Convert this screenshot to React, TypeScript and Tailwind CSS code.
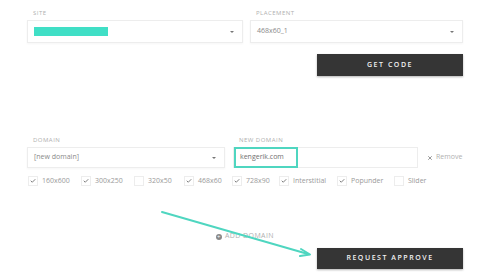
import { Check, X } from "lucide-react";

const font = { fontFamily: "'Open Sans', Lato, sans-serif" };

function Label({ children }: { children: React.ReactNode }) {
  return (
    <div className="mb-[3px] h-[8px] pl-[6px] text-[6px] leading-[8px] tracking-[0.08em] text-[#b0b0b0] uppercase">
      {children}
    </div>
  );
}

function Chevron() {
  return <span className="h-0 w-0 border-x-[2px] border-t-[2.5px] border-x-transparent border-t-[#777]" />;
}

function SelectBox({ children, className }: { children?: React.ReactNode; className?: string }) {
  return (
    <div
      className={`flex items-center justify-between border border-[#ededed] bg-white pl-[6px] pr-[8px] shadow-[0_1px_2px_rgba(0,0,0,0.04)] ${className ?? ""}`}
    >
      <div className="flex items-center text-[7px] text-[#8a8a8a]">{children}</div>
      <Chevron />
    </div>
  );
}

function Box({ label, checked }: { label: string; checked: boolean }) {
  return (
    <div className="flex items-center gap-[4px]">
      <span className="flex h-[10px] w-[10px] items-center justify-center border border-[#ededed] bg-white">
        {checked && <Check className="h-[6px] w-[6px] text-[#555]" strokeWidth={3} />}
      </span>
      <span className="text-[7px] text-[#9a9a9a]">{label}</span>
    </div>
  );
}

const sizes: [string, boolean, string][] = [
  ["160x600", true, "w-[53px]"],
  ["300x250", true, "w-[53px]"],
  ["320x50", false, "w-[50px]"],
  ["468x60", true, "w-[48px]"],
  ["728x90", true, "w-[47px]"],
  ["Interstitial", true, "w-[58px]"],
  ["Popunder", true, "w-[57px]"],
  ["Slider", false, "w-[40px]"],
];

export default function App() {
  return (
    <div className="relative h-[280px] w-[500px] overflow-hidden bg-white" style={font}>
      <div className="pl-[27px] pr-[37px] pt-[9px]">
        {/* Site / placement */}
        <div className="grid grid-cols-[216px_213px] gap-x-[7px]">
          <div>
            <Label>Site</Label>
            <SelectBox className="h-[23px]">
              <span className="h-[9px] w-[74px] bg-[#40dfc6]" />
            </SelectBox>
          </div>
          <div>
            <Label>Placement</Label>
            <SelectBox className="h-[23px]">468x60_1</SelectBox>
          </div>
        </div>
        <div className="mt-[11px] flex justify-end">
          <button className="h-[22px] w-[146px] bg-[#353535] text-[7px] font-semibold tracking-[0.22em] text-[#f2f2f2] shadow-[0_1px_2px_rgba(0,0,0,0.3)]">
            GET CODE
          </button>
        </div>

        {/* Domain */}
        <div className="mt-[60px] flex items-end">
          <div className="w-[198px]">
            <Label>Domain</Label>
            <SelectBox className="h-[21px]">[new domain]</SelectBox>
          </div>
          <div className="ml-[8px] w-[185px]">
            <Label>New domain</Label>
            <div className="h-[21px] border border-[#ededed] bg-white">
              <div className="flex h-[21px] w-[64px] -translate-y-px items-center border-2 border-[#4fd6c0] pl-[4px] text-[7px] text-[#707070]">
                kengerik.com
              </div>
            </div>
          </div>
          <div className="ml-[9px] flex h-[21px] items-center gap-[3px] text-[7px] text-[#b0b0b0]">
            <X className="h-[6px] w-[6px] text-[#777]" strokeWidth={3} />
            Remove
          </div>
        </div>

        <div className="mt-[8px] flex items-center pl-[1px]">
          {sizes.map(([s, c, w]) => (
            <div key={s} className={w}>
              <Box label={s} checked={c} />
            </div>
          ))}
        </div>

        <div className="mt-[45px] flex justify-center">
          <div className="flex h-[10px] items-center gap-[3px] text-[7px] tracking-[0.06em] text-[#b0b0b0]">
            <span className="flex h-[6px] w-[6px] items-center justify-center rounded-full bg-[#888] text-[6px] leading-none text-white">
              +
            </span>
            ADD DOMAIN
          </div>
        </div>

        <div className="mt-[6px] flex justify-end">
          <button className="h-[21px] w-[146px] bg-[#353535] text-[7px] font-semibold tracking-[0.22em] text-[#f2f2f2] shadow-[0_1px_2px_rgba(0,0,0,0.3)]">
            REQUEST APPROVE
          </button>
        </div>
      </div>

      {/* annotation arrow */}
      <svg className="pointer-events-none absolute left-0 top-0" width="500" height="280">
        <line x1="162" y1="212" x2="308" y2="254" stroke="#4fd6c0" strokeWidth="2" strokeLinecap="round" />
        <path d="M301 249 L310 254.5 L300 256" fill="none" stroke="#4fd6c0" strokeWidth="2" strokeLinecap="round" strokeLinejoin="round" />
      </svg>
    </div>
  );
}
